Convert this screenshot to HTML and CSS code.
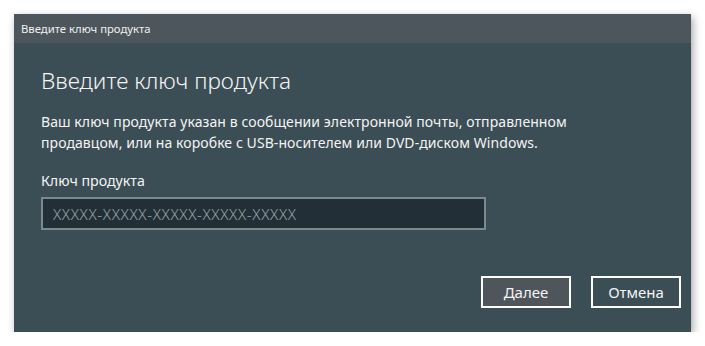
FILE: index.html
```html
<!DOCTYPE html>
<html lang="ru">
<head>
<meta charset="utf-8">
<title>Введите ключ продукта</title>
<link rel="stylesheet" href="styles.css">
</head>
<body>
<div class="window">
  <div class="titlebar">Введите ключ продукта</div>
  <div class="content">
    <h1 class="heading">Введите ключ продукта</h1>
    <p class="desc">Ваш ключ продукта указан в сообщении электронной почты, отправленном<br>продавцом, или на коробке с USB-носителем или DVD-диском Windows.</p>
    <label class="label" for="key">Ключ продукта</label>
    <input class="keyinput" id="key" type="text" placeholder="XXXXX-XXXXX-XXXXX-XXXXX-XXXXX">
    <div class="spacer"></div>
    <div class="buttons">
      <button class="btn btn-primary">Далее</button>
      <button class="btn">Отмена</button>
    </div>
  </div>
</div>
</body>
</html>
```

FILE: styles.css
```css
html, body {
  margin: 0;
  padding: 0;
  background: #ffffff;
}
body {
  padding: 14px 0 0 14px;
  font-family: "Noto Sans", "Open Sans", sans-serif;
  color: #ffffff;
}
.window {
  width: 677px;
  height: 318px;
  display: flex;
  flex-direction: column;
  background: #3b4d55;
  box-shadow: 2px 3px 8px rgba(0, 0, 0, 0.35);
}
.titlebar {
  height: 29px;
  flex: none;
  background: #4d565c;
  font-size: 11.3px;
  line-height: 29px;
  padding-left: 7px;
  color: #f0f0f0;
}
.content {
  flex: 1;
  display: flex;
  flex-direction: column;
  padding: 0 10px 24px 27px;
}
.heading {
  margin: 22px 0 0 0;
  font-size: 22.6px;
  font-weight: 300;
  line-height: 32px;
  color: #f4f4f4;
}
.desc {
  margin: 14px 0 0 0;
  font-size: 14px;
  letter-spacing: 0.08px;
  line-height: 21px;
  color: #f4f4f4;
}
.label {
  display: block;
  margin-top: 18px;
  font-size: 14.2px;
  line-height: 20px;
  color: #f4f4f4;
}
.keyinput {
  margin-top: 6px;
  width: 445px;
  height: 33px;
  box-sizing: border-box;
  border: 2px solid #7b8a8f;
  background: #222f36;
  padding: 0 10px;
  font-family: "Noto Sans", "Open Sans", sans-serif;
  font-size: 15px;
  font-weight: 300;
  letter-spacing: 0.65px;
  color: #ffffff;
  outline: none;
}
.keyinput::placeholder {
  color: #9aa3a7;
}
.spacer {
  flex: 1;
}
.buttons {
  display: flex;
  justify-content: flex-end;
  gap: 20px;
}
.btn {
  width: 90px;
  height: 32px;
  box-sizing: border-box;
  border: 2px solid #ffffff;
  background: transparent;
  color: #f4f4f4;
  font-family: "Noto Sans", "Open Sans", sans-serif;
  font-size: 15px;
  padding: 0;
}
.btn-primary {
  background: #4e555b;
}
```
